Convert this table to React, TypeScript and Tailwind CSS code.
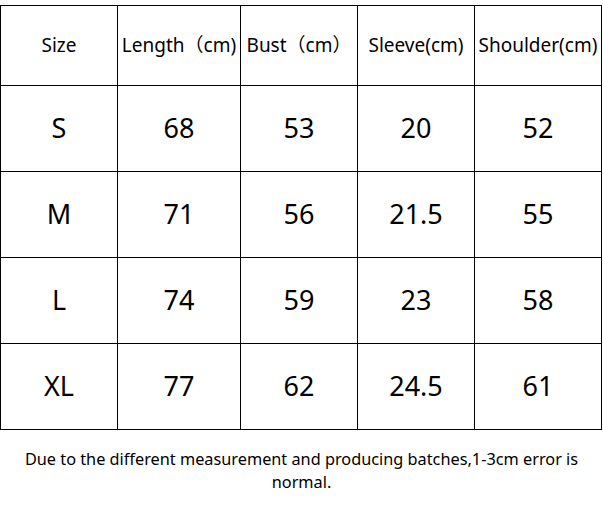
import React from "react";

const headers = ["Size", "Length（cm)", "Bust（cm）", "Sleeve(cm)", "Shoulder(cm)"];
const rows = [
  ["S", "68", "53", "20", "52"],
  ["M", "71", "56", "21.5", "55"],
  ["L", "74", "59", "23", "58"],
  ["XL", "77", "62", "24.5", "61"],
];

export default function App() {
  return (
    <div
      className="w-[603px] h-[511px] bg-white text-black pt-[5px]"
      style={{ fontFamily: '"Noto Sans", "Noto Sans CJK SC", sans-serif' }}
    >
      <table className="table-fixed border-collapse w-[601px]">
        <colgroup>
          <col className="w-[117px]" />
          <col className="w-[123px]" />
          <col className="w-[117px]" />
          <col className="w-[117px]" />
          <col className="w-[127px]" />
        </colgroup>
        <thead>
          <tr className="h-[80px]">
            {headers.map((h) => (
              <th
                key={h}
                className="border border-black p-0 text-center font-normal text-[19px] whitespace-nowrap"
              >
                {h}
              </th>
            ))}
          </tr>
        </thead>
        <tbody>
          {rows.map((r) => (
            <tr key={r[0]} className="h-[86px]">
              {r.map((c, i) => (
                <td key={i} className="border border-black p-0 text-center text-[27px]">
                  {c}
                </td>
              ))}
            </tr>
          ))}
        </tbody>
      </table>
      <p className="mt-[18px] text-center text-[16.3px] leading-[23px] px-[10px]">
        Due to the different measurement and producing batches,1-3cm error is
        <br />
        normal.
      </p>
    </div>
  );
}
